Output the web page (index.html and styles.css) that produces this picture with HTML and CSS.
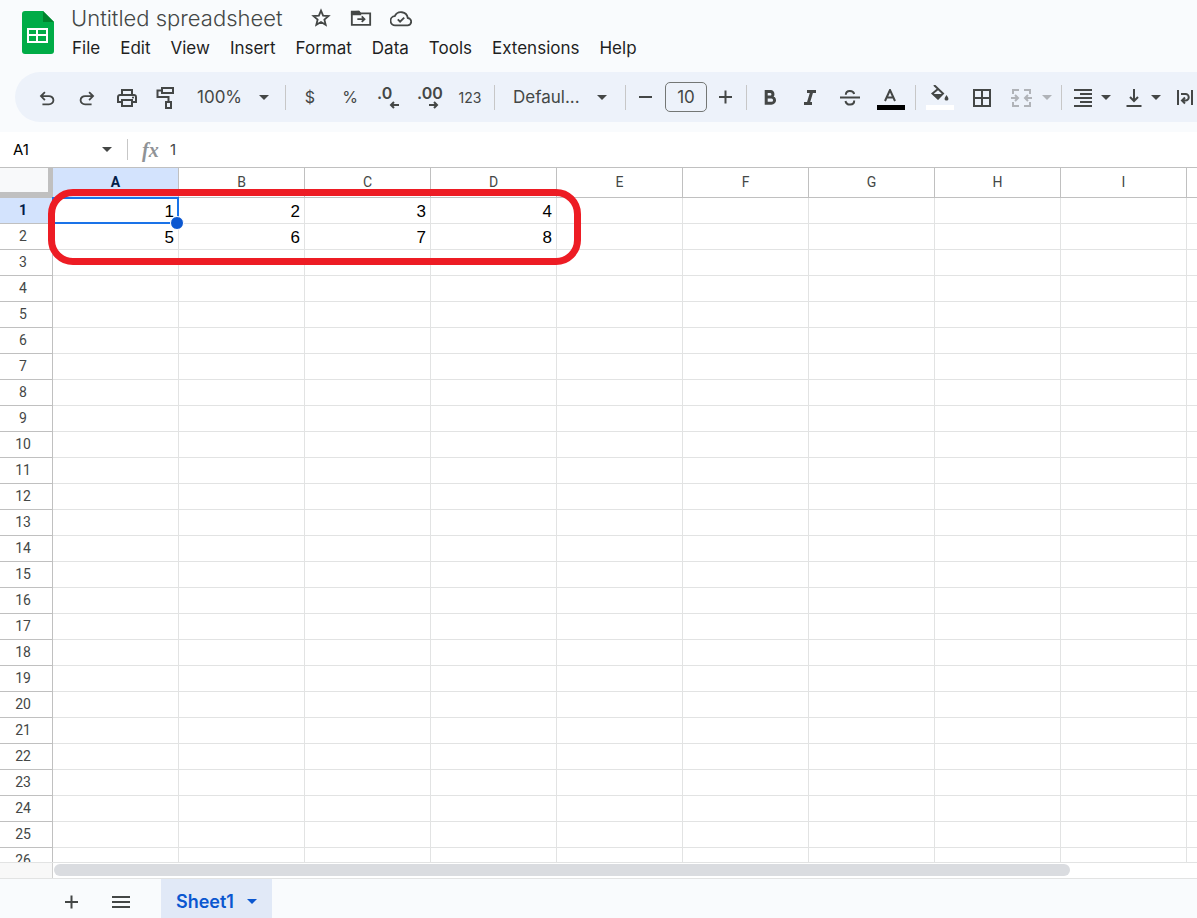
FILE: index.html
```html
<!DOCTYPE html>
<html lang="en">
<head>
    <meta charset="UTF-8">
    <meta name="viewport" content="width=device-width, initial-scale=1.0">
    <title>Untitled spreadsheet</title>
    <link rel="stylesheet" href="styles.css">
</head>
<body>
    <header class="header">
        <svg class="logo" viewBox="0 0 32 43" width="32" height="43">
            <path d="M3 0H21L32 11V40a3 3 0 0 1-3 3H3a3 3 0 0 1-3-3V3a3 3 0 0 1 3-3z" fill="#00ac47"/>
            <path d="M21 0L32 11H21z" fill="#00832d"/>
            <path d="M5 17H26V32H5zM7 19V23H14V19zM16 19V23H24V19zM7 25V30H14V25zM16 25V30H24V25z" fill="#fff" fill-rule="evenodd"/>
        </svg>
        <div class="header-main">
            <div class="title-row">
                <input class="title" type="text" value="Untitled spreadsheet" aria-label="Document name">
                <button class="title-button" aria-label="Star">
                    <svg class="line" viewBox="0 0 24 24" width="24" height="24"><path d="M12 4l2.3 5.4 5.9.5-4.5 3.9 1.4 5.7-5.1-3.1-5.1 3.1 1.4-5.7-4.5-3.9 5.9-.5z"/></svg>
                </button>
                <button class="title-button" aria-label="Move">
                    <svg class="line" viewBox="0 0 24 24" width="24" height="24"><path d="M2 5.500V19.500H22V7H11.500L9.500 5z"/><path d="M2 5H9.500L11 8H2z" fill="currentColor"/><path d="M8 13.300H15.500M12.800 10.300l3 3-3 3"/></svg>
                </button>
                <button class="title-button" aria-label="Document status">
                    <svg class="line" viewBox="0 0 24 24" width="24" height="24"><path d="M6 20H18.800a4 4 0 0 0 .6-8A7.500 7.500 0 0 0 5.200 10 5 5 0 0 0 6 20zM8.500 13.500l2.500 2.500 4.500-4.500"/></svg>
                </button>
            </div>
            <nav class="menu">
                <button>File</button>
                <button>Edit</button>
                <button>View</button>
                <button>Insert</button>
                <button>Format</button>
                <button>Data</button>
                <button>Tools</button>
                <button>Extensions</button>
                <button>Help</button>
            </nav>
        </div>
    </header>

    <div class="toolbar">
        <button class="tool" aria-label="Undo">
            <svg viewBox="0 0 24 24" width="22" height="22"><path d="M7 21v-2h7.100q1.575 0 2.737-1T18 15.500 16.837 13 14.100 12H7.800l2.600 2.600L9 16l-5-5 5-5 1.400 1.400L7.800 10h6.300q2.425 0 4.163 1.575T20 15.500t-1.737 3.925T14.100 21z"/></svg>
        </button>
        <button class="tool" aria-label="Redo">
            <svg viewBox="0 0 24 24" width="22" height="22"><path d="M17 21v-2H9.900q-1.575 0-2.737-1T6 15.500 7.163 13 9.900 12h6.300l-2.600 2.600L15 16l5-5-5-5-1.400 1.400L16.200 10H9.900q-2.425 0-4.163 1.575T4 15.500t1.737 3.925T9.900 21z"/></svg>
        </button>
        <button class="tool" aria-label="Print">
            <svg viewBox="0 0 24 24" width="24" height="24"><path d="M16 9V6H8v3H6V4h12v5zm2 4.500q.425 0 .713-.288T19 12.500t-.288-.712T18 11.500t-.712.288T17 12.500t.288.713.712.287M16 20v-4H8v4zm2 2H6v-4H2v-6q0-1.275.875-2.137T5 9h14q1.275 0 2.138.863T22 12v6h-4zm2-6v-4q0-.425-.288-.712T19 11H5q-.425 0-.712.288T4 12v4h2v-2h12v2z"/></svg>
        </button>
        <button class="tool" aria-label="Paint format">
            <svg class="line" viewBox="0 0 24 24" width="24" height="24"><path d="M7 3H18V8H7zM7 5.500H2.500V12H13.500V17M11 17H16V23H11z"/></svg>
        </button>
        <div class="dropdown zoom">
            <select aria-label="Zoom"><option>100%</option></select>
            <svg class="caret" viewBox="0 0 10 5" width="10" height="5"><path d="M0 0H10L5 5z"/></svg>
        </div>
        <span class="separator"></span>
        <button class="tool" aria-label="Format as currency">$</button>
        <button class="tool" aria-label="Format as percent">%</button>
        <button class="tool decimal" aria-label="Decrease decimal places">
            <span>.0</span>
            <svg class="line arrow" viewBox="0 0 10 8" width="10" height="8"><path d="M10 4H2M5 1L2 4l3 3"/></svg>
        </button>
        <button class="tool decimal" aria-label="Increase decimal places">
            <span>.00</span>
            <svg class="line arrow" viewBox="0 0 10 8" width="10" height="8"><path d="M0 4H8M5 1l3 3-3 3"/></svg>
        </button>
        <button class="tool small">123</button>
        <span class="separator"></span>
        <div class="dropdown font">
            <select aria-label="Font"><option>Defaul...</option></select>
            <svg class="caret" viewBox="0 0 10 5" width="10" height="5"><path d="M0 0H10L5 5z"/></svg>
        </div>
        <span class="separator"></span>
        <div class="font-size">
            <button class="step" aria-label="Decrease font size">
                <svg class="line" viewBox="0 0 14 14" width="14" height="14"><path d="M0 7H13"/></svg>
            </button>
            <input type="text" value="10" aria-label="Font size">
            <button class="step" aria-label="Increase font size">
                <svg class="line" viewBox="0 0 14 14" width="14" height="14"><path d="M0 7H13M6.500 0.500V13.500"/></svg>
            </button>
        </div>
        <span class="separator"></span>
        <button class="tool" aria-label="Bold">
            <svg class="line heavy" viewBox="0 0 24 24" width="24" height="24"><path d="M7.200 6.500H11.800a2.900 2.900 0 0 1 0 5.600H7.200zM7.200 12.100H12.500a3 3 0 0 1 0 6.100H7.200z"/></svg>
        </button>
        <button class="tool" aria-label="Italic">
            <svg class="line heavy" viewBox="0 0 24 24" width="24" height="24"><path d="M8 6.500H17M5 18.500H13M12.800 6.500L9.200 18.500"/></svg>
        </button>
        <button class="tool" aria-label="Strikethrough">
            <svg class="line" viewBox="0 0 24 24" width="24" height="24"><path d="M1 12.500H21M6.800 9.700C7 5 14 5 15.200 9M6.500 16C7.500 21 15.300 20.800 15.200 15.500"/></svg>
        </button>
        <button class="tool color-tool" aria-label="Text color">
            <svg class="line" viewBox="0 0 14 16" width="14" height="16"><path d="M1 12L6 1L11 12M3 8.500H9"/></svg>
            <span class="swatch black"></span>
        </button>
        <span class="separator"></span>
        <button class="tool color-tool" aria-label="Fill color">
            <svg viewBox="0 0 20 20" width="20" height="20"><path class="line" d="M4 0L13 8.500L8 13.500L2.500 8.500L8 4"/><path d="M2.500 9H13L8 14.500z"/><path d="M16.500 10c3 4 2 5.500 0 5.500s-3-1.500 0-5.500z"/></svg>
            <span class="swatch white"></span>
        </button>
        <button class="tool borders" aria-label="Borders">
            <svg class="line" viewBox="0 0 24 24" width="24" height="24"><path d="M4 5H20V21H4zM12 5V21M4 13H20"/></svg>
        </button>
        <button class="tool wide" aria-label="Merge cells" disabled>
            <svg class="line" viewBox="0 0 24 24" width="24" height="24"><path d="M10 5H4V9M15 5H21V9M10 21H4V17M15 21H21V17M2 13H9M6 10l3 3-3 3M23 13H16M19 10l-3 3 3 3"/></svg>
            <svg class="caret" viewBox="0 0 10 5" width="10" height="5"><path d="M0 0H10L5 5z"/></svg>
        </button>
        <span class="separator"></span>
        <button class="tool align" aria-label="Horizontal align">
            <svg class="line" viewBox="0 0 24 24" width="24" height="24"><path d="M2 5H20M8 9H20M2 13H20M8 17H20M2 21H20"/></svg>
            <svg class="caret" viewBox="0 0 10 5" width="10" height="5"><path d="M0 0H10L5 5z"/></svg>
        </button>
        <button class="tool align" aria-label="Vertical align">
            <svg class="line" viewBox="0 0 24 24" width="24" height="24"><path d="M12 4V16M8 12l4 4 4-4M4.500 21H19.500"/></svg>
            <svg class="caret" viewBox="0 0 10 5" width="10" height="5"><path d="M0 0H10L5 5z"/></svg>
        </button>
        <button class="tool" aria-label="Text wrapping">
            <svg class="line" viewBox="0 0 24 24" width="24" height="24"><path d="M4 5V20M18 5V20M7 9H11.500a3.200 3.200 0 0 1 0 6.500H8M11 12.500l-3 3 3 3"/></svg>
        </button>
    </div>

    <div class="formula-bar">
        <input class="name-box" type="text" value="A1" aria-label="Name box">
        <svg class="caret" viewBox="0 0 10 5" width="10" height="5"><path d="M0 0H10L5 5z"/></svg>
        <span class="separator"></span>
        <span class="fx">fx</span>
        <input class="formula" type="text" value="1" aria-label="Formula">
    </div>

    <main class="grid">
        <table class="sheet">
            <thead>
                <tr id="columns"><td class="corner"></td></tr>
            </thead>
            <tbody id="rows"></tbody>
        </table>
        <div class="highlight"></div>
    </main>

    <div class="scroll-row">
        <div class="scroll-corner"></div>
        <div class="scroll-track"><div class="scroll-thumb"></div></div>
    </div>

    <footer class="tabs">
        <button class="tab-button" aria-label="Add sheet">
            <svg class="line" viewBox="0 0 14 14" width="14" height="14"><path d="M1 7H14M7.500 0.500V13.500"/></svg>
        </button>
        <button class="tab-button" aria-label="All sheets">
            <svg class="line" viewBox="0 0 18 14" width="18" height="14"><path d="M0 2H18M0 7H18M0 12H18"/></svg>
        </button>
        <button class="tab">
            Sheet1
            <svg class="caret" viewBox="0 0 10 5" width="10" height="5"><path d="M0 0H10L5 5z"/></svg>
        </button>
    </footer>

    <script src="script.js"></script>
</body>
</html>
```

FILE: styles.css
```css
* {
    box-sizing: border-box;
}
body {
    font-family: Inter, Roboto, sans-serif;
    margin: 0;
    height: 100vh;
    display: flex;
    flex-direction: column;
    overflow: hidden;
    background-color: #f9fbfd;
    color: #444746;
}
button,
input,
select {
    font: inherit;
    color: inherit;
    background: none;
    border: none;
    padding: 0;
    margin: 0;
}
button {
    cursor: pointer;
}
svg {
    display: block;
    flex-shrink: 0;
    fill: currentColor;
}
.line {
    fill: none;
    stroke: currentColor;
    stroke-width: 2;
}
.heavy {
    stroke-width: 3;
}

/* Title and menus */
.header {
    display: flex;
    height: 72px;
    padding-left: 22px;
    flex-shrink: 0;
}
.logo {
    margin-top: 11px;
}
.header-main {
    padding-left: 17px;
}
.title-row {
    display: flex;
    align-items: center;
    height: 36px;
}
.title {
    width: 230px;
    font-size: 22px;
    font-weight: 300;
    line-height: 28px;
}
.title-button {
    width: 40px;
    display: flex;
    justify-content: center;
}
.title-button .line {
    width: 22px;
    height: 22px;
}
.menu {
    display: flex;
    gap: 20px;
    padding-left: 1px;
    color: #1f1f1f;
    font-size: 17px;
    line-height: 24px;
}

/* Toolbar */
.toolbar {
    display: flex;
    align-items: center;
    height: 50px;
    margin-left: 15px;
    padding-left: 12px;
    flex-shrink: 0;
    overflow: hidden;
    background-color: #edf2fa;
    border-radius: 25px 0 0 25px;
    font-size: 17px;
}
.tool {
    width: 40px;
    height: 40px;
    flex-shrink: 0;
    display: flex;
    align-items: center;
    justify-content: center;
    font-size: 16px;
}
.tool:disabled {
    color: #b0b3b8;
}
.small {
    font-size: 14px;
}
.borders {
    width: 44px;
}
.wide {
    width: 53px;
    gap: 9px;
}
.align {
    width: 50px;
    gap: 5px;
}
.separator {
    width: 1px;
    height: 25px;
    margin: 0 4px;
    flex-shrink: 0;
    background-color: #c7c7c7;
}
.dropdown {
    display: flex;
    align-items: center;
    flex-shrink: 0;
}
.dropdown select {
    appearance: none;
    flex-grow: 1;
}
.zoom {
    width: 94px;
    padding: 0 12px 0 10px;
}
.font {
    width: 122px;
    padding: 0 14px;
}
.decimal {
    flex-direction: column;
    align-items: flex-start;
    padding-left: 7px;
    font-weight: 600;
    line-height: 15px;
}
.arrow {
    margin-left: 12px;
}
.font-size {
    display: flex;
    align-items: center;
    gap: 4px;
    padding: 0 1px;
    flex-shrink: 0;
}
.font-size input {
    width: 42px;
    height: 30px;
    border: 1px solid #747775;
    border-radius: 5px;
    text-align: center;
}
.step {
    width: 30px;
    height: 30px;
    display: flex;
    align-items: center;
    justify-content: center;
}
.color-tool {
    flex-direction: column;
    justify-content: flex-end;
    padding-bottom: 7px;
}
.swatch {
    width: 28px;
    height: 5px;
}
.black {
    background-color: #000;
}
.white {
    background-color: #fff;
}

/* Formula bar */
.formula-bar {
    display: flex;
    align-items: center;
    height: 36px;
    margin-top: 10px;
    padding-left: 13px;
    flex-shrink: 0;
    background-color: #fff;
    border-bottom: 1px solid #c0c0c0;
    font-size: 15px;
}
.name-box {
    width: 89px;
    color: #000;
}
.formula-bar .separator {
    height: 21px;
    margin: 0 14px 0 15px;
}
.fx {
    width: 28px;
    font-family: "Liberation Serif", serif;
    font-size: 20px;
    font-style: italic;
    font-weight: bold;
    line-height: 20px;
    color: #8f9396;
}
.formula {
    flex-grow: 1;
}

/* Cells */
.grid {
    position: relative;
    flex: 1;
    min-height: 0;
    overflow: hidden;
    background-color: #fff;
}
.sheet {
    width: 1313px;
    table-layout: fixed;
    border-collapse: separate;
    border-spacing: 0;
}
.sheet th,
.sheet td {
    height: 26px;
    padding: 0;
    border-right: 1px solid #e2e3e3;
    border-bottom: 1px solid #e2e3e3;
}
.sheet td {
    position: relative;
    padding: 2px 4px 0 0;
    font-family: "Liberation Sans", Arial, sans-serif;
    font-size: 17px;
    line-height: 20px;
    text-align: right;
    color: #000;
}
.sheet th {
    padding-bottom: 2px;
    border-color: #c0c0c0;
    font-family: Roboto, sans-serif;
    font-size: 14px;
    font-weight: normal;
    line-height: 20px;
}
.sheet thead th {
    width: 126px;
    height: 30px;
}
.sheet tbody th {
    padding-right: 6px;
}
.sheet .corner {
    width: 53px;
    height: 30px;
    padding: 0;
    background-color: #f8f9fa;
    border-right: 5px solid #c0c0c0;
    border-bottom: 6px solid #c0c0c0;
}
.sheet .active {
    background-color: #d3e3fd;
    color: #041e49;
    font-weight: bold;
}
.selection {
    position: absolute;
    z-index: 1;
    top: -1px;
    left: -1px;
    right: -1px;
    bottom: -1px;
    border: 2px solid #1a73e8;
}
.selection::after {
    content: "";
    position: absolute;
    right: -7px;
    bottom: -8px;
    width: 12px;
    height: 12px;
    background-color: #0b57d0;
    border: 1px solid #fff;
    border-radius: 50%;
}
.highlight {
    position: absolute;
    z-index: 2;
    top: 21px;
    left: 48px;
    width: 533px;
    height: 76px;
    border: 7px solid #ed1c24;
    border-radius: 25px;
}

/* Horizontal scrollbar */
.scroll-row {
    display: flex;
    height: 17px;
    flex-shrink: 0;
    background-color: #fff;
    border-top: 1px solid #e2e3e3;
    border-bottom: 1px solid #e2e3e3;
}
.scroll-corner {
    width: 53px;
    background-color: #f8f8f8;
    border-right: 1px solid #d0d0d0;
}
.scroll-track {
    flex-grow: 1;
    padding: 1px;
}
.scroll-thumb {
    width: 89%;
    height: 12px;
    background-color: #dadce0;
    border-radius: 6px;
}

/* Sheet tabs */
.tabs {
    display: flex;
    height: 39px;
    padding-left: 46px;
    flex-shrink: 0;
}
.tab-button {
    width: 50px;
    padding-top: 6px;
    display: flex;
    align-items: center;
    justify-content: center;
}
.tab {
    display: flex;
    align-items: center;
    gap: 13px;
    margin-left: 15px;
    padding: 6px 15px 0;
    background-color: #e1e9f7;
    color: #0b57d0;
    font-size: 18px;
    font-weight: 600;
}
```

FILE: script.js
```js
// the last column has no label, it only fills the right edge
const columns = ['A', 'B', 'C', 'D', 'E', 'F', 'G', 'H', 'I', ''];
const rowCount = 26;
const values = [
    [1, 2, 3, 4],
    [5, 6, 7, 8]
];

const header = document.getElementById('columns');
columns.forEach((name, c) => {
    const th = document.createElement('th');
    th.textContent = name;
    if (c === 0) th.className = 'active';
    header.appendChild(th);
});

const body = document.getElementById('rows');
for (let r = 0; r < rowCount; r++) {
    const tr = document.createElement('tr');
    const th = document.createElement('th');
    th.textContent = r + 1;
    if (r === 0) th.className = 'active';
    tr.appendChild(th);

    columns.forEach((name, c) => {
        const td = document.createElement('td');
        if (values[r] && values[r][c]) td.textContent = values[r][c];
        if (r === 0 && c === 0) {
            const selection = document.createElement('div');
            selection.className = 'selection';
            td.appendChild(selection);
        }
        tr.appendChild(td);
    });
    body.appendChild(tr);
}
```
